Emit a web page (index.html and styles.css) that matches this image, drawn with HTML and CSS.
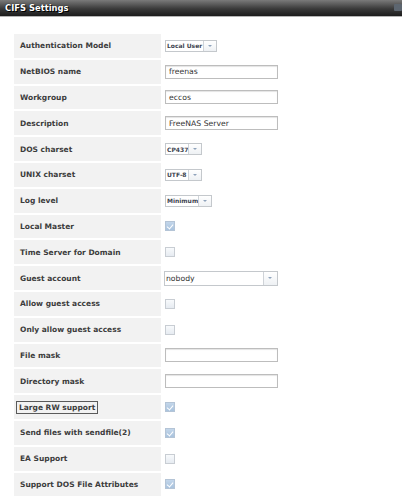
FILE: index.html
```html
<!DOCTYPE html>
<html>
<head>
<meta charset="utf-8">
<link rel="stylesheet" href="styles.css">
</head>
<body>
<div class="titlebar">
  <span class="title">CIFS Settings</span>
  <span class="close"></span>
</div>
<div class="form">
  <div class="label">Authentication Model</div>
  <div class="value"><span class="select" style="width:52px"><span class="sel-text">Local User</span><span class="arrow"></span></span></div>

  <div class="label">NetBIOS name</div>
  <div class="value"><span class="input">freenas</span></div>

  <div class="label">Workgroup</div>
  <div class="value"><span class="input">eccos</span></div>

  <div class="label">Description</div>
  <div class="value"><span class="input">FreeNAS Server</span></div>

  <div class="label">DOS charset</div>
  <div class="value"><span class="select" style="width:37px"><span class="sel-text">CP437</span><span class="arrow"></span></span></div>

  <div class="label">UNIX charset</div>
  <div class="value"><span class="select" style="width:37px"><span class="sel-text">UTF-8</span><span class="arrow"></span></span></div>

  <div class="label">Log level</div>
  <div class="value"><span class="select" style="width:47px"><span class="sel-text">Minimum</span><span class="arrow"></span></span></div>

  <div class="label">Local Master</div>
  <div class="value"><span class="check checked"></span></div>

  <div class="label">Time Server for Domain</div>
  <div class="value"><span class="check"></span></div>

  <div class="label">Guest account</div>
  <div class="value"><span class="select big"><span class="sel-text">nobody</span><span class="arrow"></span></span></div>

  <div class="label">Allow guest access</div>
  <div class="value"><span class="check"></span></div>

  <div class="label">Only allow guest access</div>
  <div class="value"><span class="check"></span></div>

  <div class="label">File mask</div>
  <div class="value"><span class="input"></span></div>

  <div class="label">Directory mask</div>
  <div class="value"><span class="input"></span></div>

  <div class="label"><span class="focused">Large RW support</span></div>
  <div class="value"><span class="check checked"></span></div>

  <div class="label">Send files with sendfile(2)</div>
  <div class="value"><span class="check checked"></span></div>

  <div class="label">EA Support</div>
  <div class="value"><span class="check"></span></div>

  <div class="label">Support DOS File Attributes</div>
  <div class="value"><span class="check checked"></span></div>
</div>
</body>
</html>
```
FILE: styles.css
```css
html, body {
  margin: 0;
  padding: 0;
  background: #ffffff;
  font-family: "DejaVu Sans", Verdana, sans-serif;
}

.titlebar {
  height: 16px;
  background: linear-gradient(#7a7a7a, #3a3a3a 55%, #1c1c1c);
  border-bottom: 1px solid #b5b5b5;
  display: flex;
  align-items: center;
  justify-content: space-between;
  padding: 0 0 0 5px;
  box-sizing: content-box;
}

.title {
  color: #ffffff;
  font-weight: bold;
  font-size: 8.4px;
  text-shadow: 0 0 1px #000, 1px 1px 0 #000;
  line-height: 16px;
}

.close {
  width: 8px;
  height: 7px;
  margin-right: 0;
  margin-top: -2px;
  background: #5d6670;
  border-radius: 1px;
}

.form {
  display: grid;
  grid-template-columns: 147px 1fr;
  grid-auto-rows: 23.8px;
  row-gap: 2px;
  column-gap: 2px;
  padding: 17px 7px 0 14px;
}

.label {
  background: #f2f2f2;
  display: flex;
  align-items: center;
  padding-left: 6px;
  font-size: 7.5px;
  font-weight: bold;
  color: #3c3c3c;
}

.value {
  display: flex;
  align-items: center;
  padding-left: 1px;
}

.focused {
  outline: 1px solid #5a5a5a;
  outline-offset: 0;
  padding: 1px 2px 1px 2px;
  margin-left: -3px;
}

.input {
  box-sizing: border-box;
  width: 113px;
  height: 14px;
  border: 1px solid #bdbdbd;
  box-shadow: inset 0 1px 1px #e4e4e4;
  background: #fff;
  font-size: 7.7px;
  color: #333;
  padding-left: 3px;
  display: flex;
  align-items: center;
  margin-left: 1px;
}

.select {
  box-sizing: border-box;
  height: 12px;
  border: 1px solid #c4c8cc;
  background: #fff;
  display: flex;
  align-items: stretch;
  margin-left: 1px;
}

.select .sel-text {
  flex: 1;
  font-size: 6px;
  font-weight: bold;
  color: #3d4450;
  display: flex;
  align-items: center;
  padding-left: 1px;
  white-space: nowrap;
  overflow: hidden;
}

.select .arrow {
  width: 12px;
  border-left: 1px solid #cfd3d8;
  background: linear-gradient(#ffffff, #eef1f4);
  position: relative;
}

.select .arrow::after {
  content: "";
  position: absolute;
  left: 4px;
  top: 4px;
  border-left: 2.5px solid transparent;
  border-right: 2.5px solid transparent;
  border-top: 2.5px solid #8fa3bb;
}

.select.big {
  width: 114px;
  height: 15px;
  margin-left: 0;
}

.select.big .sel-text {
  font-size: 7.7px;
  font-weight: normal;
  color: #333;
}

.select.big .arrow {
  width: 13px;
}

.select.big .arrow::after {
  left: 4px;
  top: 5px;
}

.check {
  box-sizing: border-box;
  width: 10px;
  height: 10px;
  border: 1px solid #c8cdd3;
  background: linear-gradient(#f8fafc, #e6ebf1);
  position: relative;
  margin-left: 0.5px;
}

.check.checked {
  background: linear-gradient(#c3d6ea, #a9c3de);
  border-color: #b4c4d6;
}

.check.checked::after {
  content: "";
  position: absolute;
  left: 2.5px;
  top: 1px;
  width: 3px;
  height: 5px;
  border-right: 1.5px solid #ffffff;
  border-bottom: 1.5px solid #ffffff;
  transform: rotate(40deg);
}
```
